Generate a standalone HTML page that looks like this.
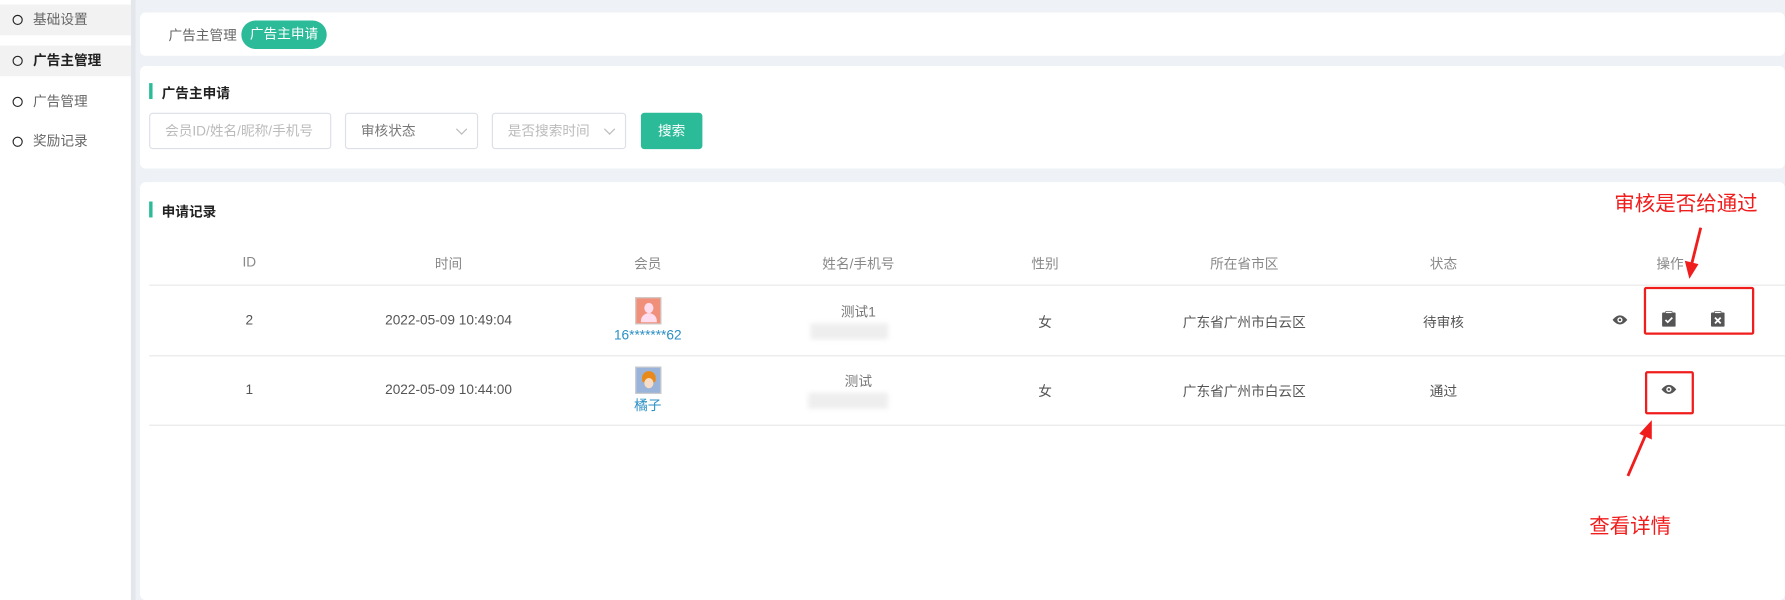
<!DOCTYPE html>
<html><head><meta charset="utf-8"><style>
*{margin:0;padding:0;box-sizing:border-box}
html,body{width:1785px;height:600px;overflow:hidden;background:#fff}
#w{position:absolute;left:0;top:0;width:1568px;height:527px;transform:scale(1.13839,1.13852);transform-origin:0 0;font-family:"Liberation Sans","Noto Sans CJK SC",sans-serif;font-size:12px;color:#555}
.a{position:absolute}
.side{left:0;top:0;width:115px;height:527px;background:#fff}
.mi{position:absolute;left:0;width:115px;height:27px;line-height:27px;padding-left:29px;color:#666}
.mi:before{content:"";position:absolute;left:11px;top:9px;width:7px;height:7px;border:1.6px solid #222;border-radius:50%}
.main{left:115px;top:0;width:1453px;height:527px;background:#eef1f5;border-left:4px solid #e3e6ea}
.card{position:absolute;background:#fff;border-radius:5px}
.inp{position:absolute;height:32px;border:1px solid #dcdfe6;border-radius:3px;line-height:30px;padding-left:13px;color:#bbb}
.chev{position:absolute;right:10px;top:10px;width:7px;height:7px;border-right:1px solid #bbb;border-bottom:1px solid #bbb;transform:rotate(45deg)}
.c{position:absolute;transform:translateX(-50%);white-space:nowrap;text-align:center}
.hl{position:absolute;left:131px;width:1437px;height:1px;background:#e8e8e8}
.red{color:#f01d1d;font-size:18px}
.box{position:absolute;border:2.5px solid #f01d1d;border-radius:2px}
</style></head><body><div id="w">
<div class="a side">
 <div class="mi" style="top:4px;background:#f2f2f2">基础设置</div>
 <div class="mi" style="top:40px;background:#f2f2f2;color:#222;font-weight:bold">广告主管理</div>
 <div class="mi" style="top:76px">广告管理</div>
 <div class="mi" style="top:111px">奖励记录</div>
</div>
<div class="a main"></div>
<div class="card" style="left:123px;top:11px;width:1445px;height:38px">
 <div class="a" style="left:25px;top:11px;color:#666">广告主管理</div>
 <div class="a" style="left:89px;top:7px;width:75px;height:25px;border-radius:13px;background:#2bbb98;color:#fff;text-align:center;line-height:25px">广告主申请</div>
</div>
<div class="card" style="left:123px;top:58px;width:1445px;height:90px">
 <div class="a" style="left:8px;top:15px;width:3px;height:14px;background:#2bbb98"></div>
 <div class="a" style="left:19px;top:15px;font-weight:bold;color:#222">广告主申请</div>
 <div class="inp" style="left:8px;top:41px;width:160px">会员ID/姓名/昵称/手机号</div>
 <div class="inp" style="left:180px;top:41px;width:117px;color:#777">审核状态<span class="chev"></span></div>
 <div class="inp" style="left:309px;top:41px;width:118px">是否搜索时间<span class="chev"></span></div>
 <div class="a" style="left:440px;top:41px;width:54px;height:32px;background:#2bbb98;border-radius:3px;color:#fff;text-align:center;line-height:32px">搜索</div>
</div>
<div class="card" style="left:123px;top:160px;width:1445px;height:367px">
 <div class="a" style="left:8px;top:17px;width:3px;height:14px;background:#2bbb98"></div>
 <div class="a" style="left:19px;top:17px;font-weight:bold;color:#222">申请记录</div>
</div>
<div class="c" style="left:219px;top:223px;color:#888">ID</div>
<div class="c" style="left:394px;top:223px;color:#888">时间</div>
<div class="c" style="left:569px;top:223px;color:#888">会员</div>
<div class="c" style="left:754px;top:223px;color:#888">姓名/手机号</div>
<div class="c" style="left:918px;top:223px;color:#888">性别</div>
<div class="c" style="left:1093px;top:223px;color:#888">所在省市区</div>
<div class="c" style="left:1268px;top:223px;color:#888">状态</div>
<div class="c" style="left:1467px;top:223px;color:#888">操作</div>
<div class="hl" style="top:250px"></div>
<div class="hl" style="top:312px"></div>
<div class="hl" style="top:373px"></div>
<div class="c" style="left:219px;top:274px">2</div>
<div class="c" style="left:394px;top:274px">2022-05-09 10:49:04</div>
<div class="a" style="left:558px;top:261px;width:23px;height:24px;border:1px solid #ccc;background:#f0907a"><div class="a" style="left:7px;top:4px;width:8px;height:9px;border-radius:50%;background:#fde"></div><div class="a" style="left:4px;top:13px;width:14px;height:8px;border-radius:7px 7px 0 0;background:#fde"></div></div>
<div class="c" style="left:569px;top:287px;color:#2a8fc4">16*******62</div>
<div class="c" style="left:754px;top:265px;color:#777">测试1</div>
<div class="a" style="left:712px;top:284px;width:68px;height:14px;background:#eee;filter:blur(2px)"></div>
<div class="c" style="left:918px;top:274px">女</div>
<div class="c" style="left:1093px;top:274px">广东省广州市白云区</div>
<div class="c" style="left:1268px;top:274px">待审核</div>
<div class="c" style="left:219px;top:335px">1</div>
<div class="c" style="left:394px;top:335px">2022-05-09 10:44:00</div>
<div class="a" style="left:558px;top:322px;width:23px;height:24px;border:1px solid #ccc;background:#9ab3d8"><div class="a" style="left:5px;top:3px;width:12px;height:10px;border-radius:6px 6px 2px 2px;background:#e88a1a"></div><div class="a" style="left:7px;top:9px;width:8px;height:9px;border-radius:50%;background:#f7dcc8"></div></div>
<div class="c" style="left:569px;top:347px;color:#2a8fc4">橘子</div>
<div class="c" style="left:754px;top:326px;color:#777">测试</div>
<div class="a" style="left:710px;top:345px;width:70px;height:14px;background:#eee;filter:blur(2px)"></div>
<div class="c" style="left:918px;top:335px">女</div>
<div class="c" style="left:1093px;top:335px">广东省广州市白云区</div>
<div class="c" style="left:1268px;top:335px">通过</div>
<svg class="a" style="left:1416px;top:276px" width="14" height="10" viewBox="0 0 14 10"><path d="M0.5 5Q7 -3 13.5 5Q7 13 0.5 5Z" fill="#555"/><circle cx="7" cy="5" r="2.3" fill="#fff"/><circle cx="7" cy="5" r="1.1" fill="#555"/></svg>
<svg class="a" style="left:1459px;top:342px;top:337px" width="14" height="10" viewBox="0 0 14 10"><path d="M0.5 5Q7 -3 13.5 5Q7 13 0.5 5Z" fill="#555"/><circle cx="7" cy="5" r="2.3" fill="#fff"/><circle cx="7" cy="5" r="1.1" fill="#555"/></svg>
<svg class="a" style="left:1460px;top:273px" width="12" height="14" viewBox="0 0 12 14"><rect x="0" y="1.5" width="12" height="12.5" rx="1" fill="#555"/><rect x="3" y="0" width="6" height="3" fill="#555"/><rect x="3.5" y="0.8" width="5" height="1.2" fill="#fff"/><path d="M3 8l2 2 4-4" stroke="#fff" stroke-width="1.5" fill="none"/></svg>
<svg class="a" style="left:1503px;top:273px" width="12" height="14" viewBox="0 0 12 14"><rect x="0" y="1.5" width="12" height="12.5" rx="1" fill="#555"/><rect x="3" y="0" width="6" height="3" fill="#555"/><rect x="3.5" y="0.8" width="5" height="1.2" fill="#fff"/><path d="M3.5 6l5 5M8.5 6l-5 5" stroke="#fff" stroke-width="1.6"/></svg>
<div class="box" style="left:1444px;top:252px;width:97px;height:42px"></div>
<div class="box" style="left:1445px;top:326px;width:43px;height:38px"></div>
<div class="a red" style="left:1418px;top:165px">审核是否给通过</div>
<div class="a red" style="left:1396px;top:448px">查看详情</div>
<svg class="a" style="left:0;top:0" width="1568" height="527"><path d="M1494 200L1486 232" stroke="#f01d1d" stroke-width="2.5"/><path d="M1480 229L1484 245L1492 232Z" fill="#f01d1d"/><path d="M1430 418L1446 381" stroke="#f01d1d" stroke-width="2.5"/><path d="M1440 381L1451 369L1451 386Z" fill="#f01d1d"/></svg>
</div></body></html>
